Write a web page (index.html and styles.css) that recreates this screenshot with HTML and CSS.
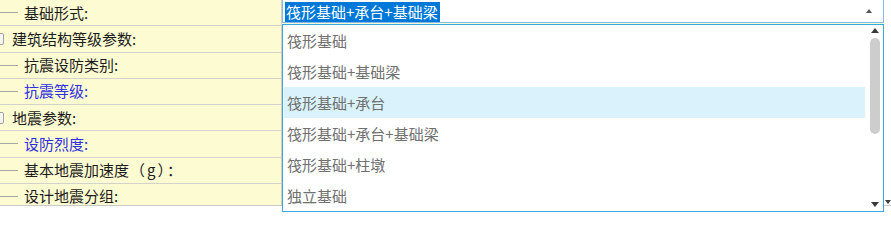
FILE: index.html
```html
<!DOCTYPE html>
<html lang="zh">
<head>
<meta charset="utf-8">
<title>基础形式</title>
<link rel="stylesheet" href="styles.css">
</head>
<body>
<div class="grid">
  <div class="table">
    <div class="row"><div class="label"><span class="branch"></span><span class="txt">基础形式:</span></div><div class="value"></div></div>
    <div class="row"><div class="label group"><span class="toggle"></span><span class="txt">建筑结构等级参数:</span></div><div class="value"></div></div>
    <div class="row"><div class="label"><span class="branch"></span><span class="txt">抗震设防类别:</span></div><div class="value"></div></div>
    <div class="row"><div class="label"><span class="branch"></span><span class="txt blue">抗震等级:</span></div><div class="value"></div></div>
    <div class="row"><div class="label group"><span class="toggle"></span><span class="txt">地震参数:</span></div><div class="value"></div></div>
    <div class="row"><div class="label"><span class="branch"></span><span class="txt blue">设防烈度:</span></div><div class="value"></div></div>
    <div class="row"><div class="label"><span class="branch"></span><span class="txt">基本地震加速度<span class="paren">（g）：</span></span></div><div class="value"></div></div>
    <div class="row"><div class="label"><span class="branch"></span><span class="txt">设计地震分组:</span></div><div class="value"></div></div>
  </div>
  <div class="vscroll"><span class="tri-down small"></span></div>
</div>

<div class="combo">
  <div class="input">
    <span class="sel">筏形基础+承台+基础梁</span>
    <span class="tri-up tiny"></span>
  </div>
  <div class="list">
    <div class="items">
      <div class="item">筏形基础</div>
      <div class="item">筏形基础+基础梁</div>
      <div class="item hover">筏形基础+承台</div>
      <div class="item">筏形基础+承台+基础梁</div>
      <div class="item">筏形基础+柱墩</div>
      <div class="item">独立基础</div>
    </div>
    <div class="sb">
      <span class="tri-up"></span>
      <div class="thumb"></div>
      <div class="track"></div>
      <span class="tri-down"></span>
    </div>
  </div>
</div>
</body>
</html>
```

FILE: styles.css
```css
* { box-sizing: border-box; }
html, body { margin: 0; padding: 0; background: #ffffff; }
body {
  width: 891px;
  height: 217px;
  overflow: hidden;
  position: relative;
  font-family: "Noto Sans CJK SC", "Microsoft YaHei", sans-serif;
  font-size: 15px;
  color: #1c1c1c;
}

.grid {
  display: flex;
  height: 206px;
  border-bottom: 1px solid #c9c9c9;
  overflow: hidden;
}
.table { width: 884px; display: flex; flex-direction: column; }
.row {
  display: flex;
  height: 26.25px;
  flex: none;
  border-bottom: 1px solid #d3d3cc;
}
.label {
  width: 282px;
  flex: none;
  background: #fcfbd2;
  border-right: 1px solid #cfcfc8;
  display: flex;
  align-items: center;
  line-height: 20px;
  white-space: nowrap;
}
.value { flex: 1; background: #fcfbd2; }
.branch {
  width: 18px;
  height: 1px;
  background: #a9a9a3;
  margin-right: 6px;
  flex: none;
}
.group .toggle {
  width: 11px;
  height: 12px;
  margin-left: -7px;
  margin-right: 8px;
  border: 1px solid #a3a3a3;
  border-radius: 2px;
  background: #f6f6f1;
  flex: none;
}
.blue { color: #2f2fe0; }
.paren { letter-spacing: 2px; margin-left: 1px; }

.vscroll {
  flex: 1;
  display: flex;
  flex-direction: column;
  justify-content: flex-end;
  align-items: center;
  padding-bottom: 1px;
}

.tri-down, .tri-up {
  display: block;
  width: 0; height: 0;
  border-left: 4.5px solid transparent;
  border-right: 4.5px solid transparent;
}
.tri-down { border-top: 5px solid #3a3a3a; }
.tri-up { border-bottom: 5px solid #3a3a3a; }
.tri-down.small { border-left-width: 3.5px; border-right-width: 3.5px; border-top-width: 4px; }
.tri-up.tiny { border-left-width: 3px; border-right-width: 3px; border-bottom-width: 4px; border-bottom-color: #555; }

/* combo box overlay */
.combo {
  position: absolute;
  left: 282px;
  top: -1px;
  width: 602px;
}
.input {
  height: 24px;
  border: 1px solid #86b8ec;
  background: #fff;
  display: flex;
  align-items: center;
  justify-content: space-between;
  padding: 0 11px 0 2px;
}
.sel {
  background: #0078d7;
  color: #fff;
  line-height: 20px;
  height: 20px;
  padding: 0 2px 0 1px;
  margin-top: 1px;
  white-space: nowrap;
}
.list {
  margin-top: 1px;
  height: 188px;
  border: 1px solid #3aa8dd;
  background: #fff;
  display: flex;
}
.items { flex: 1; padding-left: 1px; }
.item {
  height: 31px;
  line-height: 31px;
  padding-left: 3px;
  color: #707070;
  white-space: nowrap;
}
.item.hover { background: #d9f2fb; margin-right: 1px; }
.sb {
  width: 17px;
  flex: none;
  display: flex;
  flex-direction: column;
  align-items: center;
  padding: 3px 0 4px;
}
.sb .tri-up { margin-bottom: 5px; }
.thumb {
  width: 10px;
  height: 96px;
  background: #cdcdcd;
  border-radius: 5px;
  flex: none;
}
.track { flex: 1; }
```
